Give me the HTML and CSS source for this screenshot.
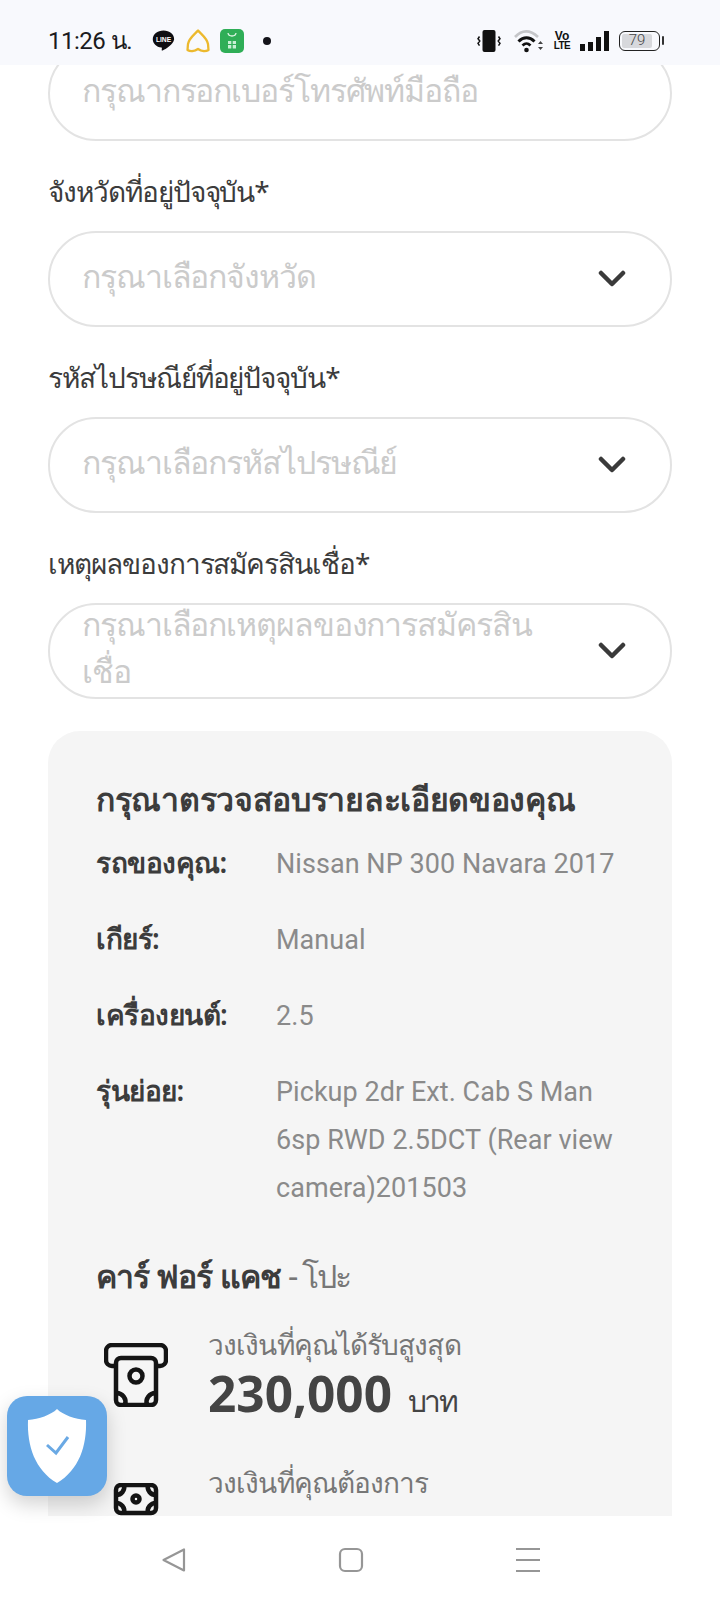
FILE: index.html
```html
<!DOCTYPE html>
<html lang="th">
<head>
<meta charset="utf-8">
<title>สมัครสินเชื่อ</title>
<link rel="stylesheet" href="styles.css">
</head>
<body>
<div class="phone">
  <header class="status">
    <div class="status-left">
      <span class="clock">11:26 น.</span>
      <svg class="ic-line" viewBox="0 0 24 24"><path d="M12 1.500C5.600 1.500.8 5.500.8 10.600c0 4.400 3.800 8 9 8.800.5.100.6.500.5 1l-.2 1.500c0 .6.400.8 1 .5 3-1.500 11.300-6.500 12-11.800C23.200 5.500 18.400 1.500 12 1.500z" fill="#0d0d12"/><text x="12" y="13.200" class="line-text">LINE</text></svg>
      <svg class="ic-bell" viewBox="0 0 24 24"><path d="M12 1.500C9 5 3 9 2 15c-.2 2-.3 4-.5 6 2.500 1.500 7 1.500 10.500-1 3.500 2.500 8 2.500 10.500 1-.2-2-.3-4-.5-6C21 9 15 5 12 1.500z" fill="none" stroke="#ecb92e" stroke-width="2.300" stroke-linejoin="round"/></svg>
      <svg class="ic-store" viewBox="0 0 24 24"><rect width="24" height="24" rx="5" fill="#2fae57"/><path d="M8 4c.5 4 7.500 4 8 0" fill="none" stroke="#dff5e5" stroke-width="1.300"/><path d="M8 12h3.300v3H8zM12.700 12H16v3h-3.300zM8 16h3.300v3.500H8zM12.700 16H16v3.500h-3.300z" fill="#c8efd4"/></svg>
      <span class="dot"></span>
    </div>
    <div class="status-right">
      <svg class="ic-vib" viewBox="0 0 24 22"><rect x="5.500" y="0" width="13" height="22" rx="2" fill="#111"/><path d="M2.500 6.500l-1.500 2.300 1.800 2.300-1.800 2.300 1.500 2.300M21.500 6.500l1.500 2.300-1.800 2.300 1.800 2.300-1.500 2.300" fill="none" stroke="#111" stroke-width="1.500"/></svg>
      <svg class="ic-wifi" viewBox="0 0 30 24"><path d="M1 8c7-7.500 15-7.500 23 0" fill="none" stroke="#c5c6c9" stroke-width="2.600"/><path d="M4.500 12.500c5-5 11-5 16 0" fill="none" stroke="#111" stroke-width="3"/><path d="M8.500 16.500c3-2.800 5-2.800 8 0" fill="none" stroke="#111" stroke-width="2.800"/><circle cx="12.500" cy="21" r="2.300" fill="#111"/><path d="M24 15l2.500-3 2.500 3zM24 18l2.500 3 2.500-3z" fill="#444"/></svg>
      <span class="volte"><b class="vo">Vo</b><b class="lte">LTE</b></span>
      <span class="signal"><i class="b1"></i><i class="b2"></i><i class="b3"></i><i class="b4"></i></span>
      <span class="battery"><span class="level">79</span></span>
    </div>
  </header>

  <main class="viewport">
    <div class="page">
      <div class="input">
        <span class="ph">กรุณากรอกเบอร์โทรศัพท์มือถือ</span>
      </div>
      <label class="label">จังหวัดที่อยู่ปัจจุบัน*</label>
      <div class="input">
        <span class="ph">กรุณาเลือกจังหวัด</span>
        <svg class="chev" viewBox="0 0 28 18"><path d="M3 3l11 11L25 3" /></svg>
      </div>
      <label class="label">รหัสไปรษณีย์ที่อยู่ปัจจุบัน*</label>
      <div class="input">
        <span class="ph">กรุณาเลือกรหัสไปรษณีย์</span>
        <svg class="chev" viewBox="0 0 28 18"><path d="M3 3l11 11L25 3" /></svg>
      </div>
      <label class="label">เหตุผลของการสมัครสินเชื่อ*</label>
      <div class="input">
        <span class="ph">กรุณาเลือกเหตุผลของการสมัครสิน<br>เชื่อ</span>
        <svg class="chev" viewBox="0 0 28 18"><path d="M3 3l11 11L25 3" /></svg>
      </div>

      <section class="card">
        <h2 class="card-title">กรุณาตรวจสอบรายละเอียดของคุณ</h2>
        <div class="row"><span class="key">รถของคุณ:</span><span class="val">Nissan NP 300 Navara 2017</span></div>
        <div class="row"><span class="key">เกียร์:</span><span class="val">Manual</span></div>
        <div class="row"><span class="key">เครื่องยนต์:</span><span class="val">2.5</span></div>
        <div class="row"><span class="key">รุ่นย่อย:</span><span class="val">Pickup 2dr Ext. Cab S Man 6sp RWD 2.5DCT (Rear view camera)201503</span></div>
        <h3 class="product"><span class="product-name">คาร์ ฟอร์ แคช</span> <span class="product-sub">- โปะ</span></h3>
        <div class="money">
          <svg class="money-ic" viewBox="0 0 64 64"><rect x="2" y="2" width="60" height="21" rx="6"/><rect x="12" y="15" width="40" height="47" rx="5" class="fillbg"/><circle cx="32" cy="33" r="6.500"/><path d="M12 50a9 9 0 0 1 9 12M52 50a9 9 0 0 0-9 12"/></svg>
          <div class="money-text"><div class="money-label">วงเงินที่คุณได้รับสูงสุด</div><div class="amount"><b>230,000</b> <span class="unit">บาท</span></div></div>
        </div>
        <div class="money second">
          <svg class="money-ic" viewBox="0 0 64 64"><rect x="12" y="2" width="40" height="28" rx="5"/><circle cx="32" cy="16" r="3.500"/><path d="M12 12a8 8 0 0 0 8-10M52 12a8 8 0 0 1-8-10M12 20a8 8 0 0 1 8 10M52 20a8 8 0 0 0-8 10"/></svg>
          <div class="money-text"><div class="money-label">วงเงินที่คุณต้องการ</div><div class="amount"><b>100,000</b></div></div>
        </div>
      </section>
    </div>
  </main>

  <nav class="navbar">
    <svg class="nav-ic" viewBox="0 0 26 26"><path d="M23 2.500v21L2.500 13z"/></svg>
    <svg class="nav-ic" viewBox="0 0 26 26"><rect x="2" y="2" width="22" height="22" rx="5"/></svg>
    <svg class="nav-ic" viewBox="0 0 26 26"><path d="M1 2h24M1 13h24M1 24h24"/></svg>
  </nav>

  <div class="shield">
    <svg viewBox="0 0 60 74"><path d="M30 0c6 6 18 10 29 11 1 26-7 50-29 63C8 61 0 37 1 11 12 10 24 6 30 0z" fill="#fff"/><path d="M20 36l9 8 12-16" fill="none" stroke="#6aa9e4" stroke-width="3"/></svg>
  </div>
</div>
</body>
</html>
```
FILE: styles.css
```css
* { box-sizing: border-box; }
html, body { margin: 0; padding: 0; background: #fff; }
body { font-family: "Noto Sans", "Open Sans", "Liberation Sans", sans-serif; }

.phone { position: relative; width: 720px; height: 1604px; overflow: hidden; display: flex; flex-direction: column; }

.status { height: 65px; flex: none; background: #f8f9fd; display: flex; justify-content: space-between; align-items: center; padding: 16px 60px 0 48px; }
.status-left, .status-right { display: flex; align-items: center; }
.clock { font: 400 24px/1 Roboto, "Noto Sans", sans-serif; letter-spacing: -.5px; color: #1b1b20; margin-right: 20px; width: 84px; white-space: nowrap; }
.ic-line { width: 23px; height: 23px; margin-right: 11px; }
.line-text { font: 700 7px "Liberation Sans", sans-serif; fill: #fff; text-anchor: middle; }
.ic-bell { width: 24px; height: 24px; margin-right: 10px; }
.ic-store { width: 24px; height: 24px; margin-right: 19px; }
.dot { width: 8px; height: 8px; border-radius: 50%; background: #14141a; }
.ic-vib { width: 24px; height: 22px; margin-right: 13px; }
.ic-wifi { width: 30px; height: 24px; margin-right: 10px; }
.volte { display: flex; flex-direction: column; align-items: center; width: 16px; font-family: "Liberation Sans", sans-serif; margin-right: 10px; color: #111; }
.vo { font-size: 12px; line-height: 10px; }
.lte { font-size: 10px; line-height: 10px; letter-spacing: -.6px; }
.signal { display: flex; align-items: flex-end; gap: 3px; height: 20px; margin-right: 10px; }
.signal i { width: 5px; background: #111; display: block; }
.b1 { height: 7px; } .b2 { height: 9px; } .b3 { height: 14px; } .b4 { height: 20px; }
.battery { position: relative; width: 41px; height: 20px; border: 1.500px solid #222; border-radius: 6px; padding: 2px; display: flex; }
.battery::after { content: ""; position: absolute; right: -5px; top: 4px; width: 2px; height: 9px; background: #333; border-radius: 1px; }
.level { width: 30px; background: #d7d8dc; border-radius: 2px; font: 300 15px/13px Roboto, sans-serif; color: #444; text-align: center; }

.viewport { flex: 1; overflow: hidden; }
.page { margin-top: -20px; padding: 0 48px; }

.input { height: 96px; border: 2px solid #e3e3e3; border-radius: 48px; padding: 0 32px; display: flex; align-items: center; justify-content: space-between; background: #fff; }
.ph { font-size: 32px; font-weight: 300; line-height: 47px; letter-spacing: -1.100px; color: #cbcbcb; padding-bottom: 8px; }
.chev { width: 28px; height: 18px; margin-right: 12px; flex: none; fill: none; stroke: #3a3a3a; stroke-width: 4.500; stroke-linecap: round; stroke-linejoin: round; }
.label { display: block; height: 90px; padding-top: 28px; font-size: 28px; line-height: 44px; letter-spacing: -1.050px; color: #3c3c3c; }

.card { margin-top: 32px; background: #f5f5f5; border-radius: 32px; padding: 38px 48px 40px; }
.card-title { margin: 0 0 9px; font-size: 32px; font-weight: 700; line-height: 60px; letter-spacing: -.3px; color: #3c3c3c; }
.row { display: flex; padding-bottom: 26px; font-size: 28px; line-height: 48px; }
.key { width: 180px; flex: none; font-weight: 600; letter-spacing: -.5px; color: #3c3c3c; }
.val { font-family: Roboto, sans-serif; font-size: 27px; letter-spacing: .05px; color: #8a8a8a; font-weight: 400; padding-top: 2px; }
.product { margin: 13px 0 20px; font-size: 32px; font-weight: 600; line-height: 50px; letter-spacing: -1px; color: #3c3c3c; }
.product-sub { font-weight: 400; letter-spacing: -2.200px; color: #777; }
.money { display: flex; gap: 40px; padding-left: 8px; }
.money.second { margin-top: 32px; }
.money-ic { width: 64px; height: 64px; flex: none; margin-top: 22px; fill: none; stroke: #141414; stroke-width: 4.500; }
.second .money-ic { margin-top: 24px; }
.second .amount { padding-top: 3px; }
.fillbg { fill: #f5f5f5; }
.money-label { font-size: 28px; font-weight: 300; line-height: 46px; letter-spacing: -.9px; color: #777; }
.amount { font-size: 30px; font-weight: 300; line-height: 52px; color: #444; }
.amount b { font-size: 49.500px; font-weight: 700; margin-right: 8px; }
.unit { letter-spacing: -2.500px; }

.navbar { position: absolute; left: 0; right: 0; bottom: 0; height: 88px; background: #fff; display: flex; justify-content: space-between; padding: 0 179px 0 161px; align-items: center; }
.nav-ic { width: 26px; height: 26px; fill: none; stroke: #969696; stroke-width: 2.200; stroke-linejoin: round; }

.shield { position: absolute; left: 7px; top: 1396px; width: 100px; height: 100px; border-radius: 20px; background: #66a8e6; box-shadow: 0 8px 20px rgba(0,0,0,.18); display: flex; align-items: center; justify-content: center; }
.shield svg { width: 60px; height: 74px; }
```
